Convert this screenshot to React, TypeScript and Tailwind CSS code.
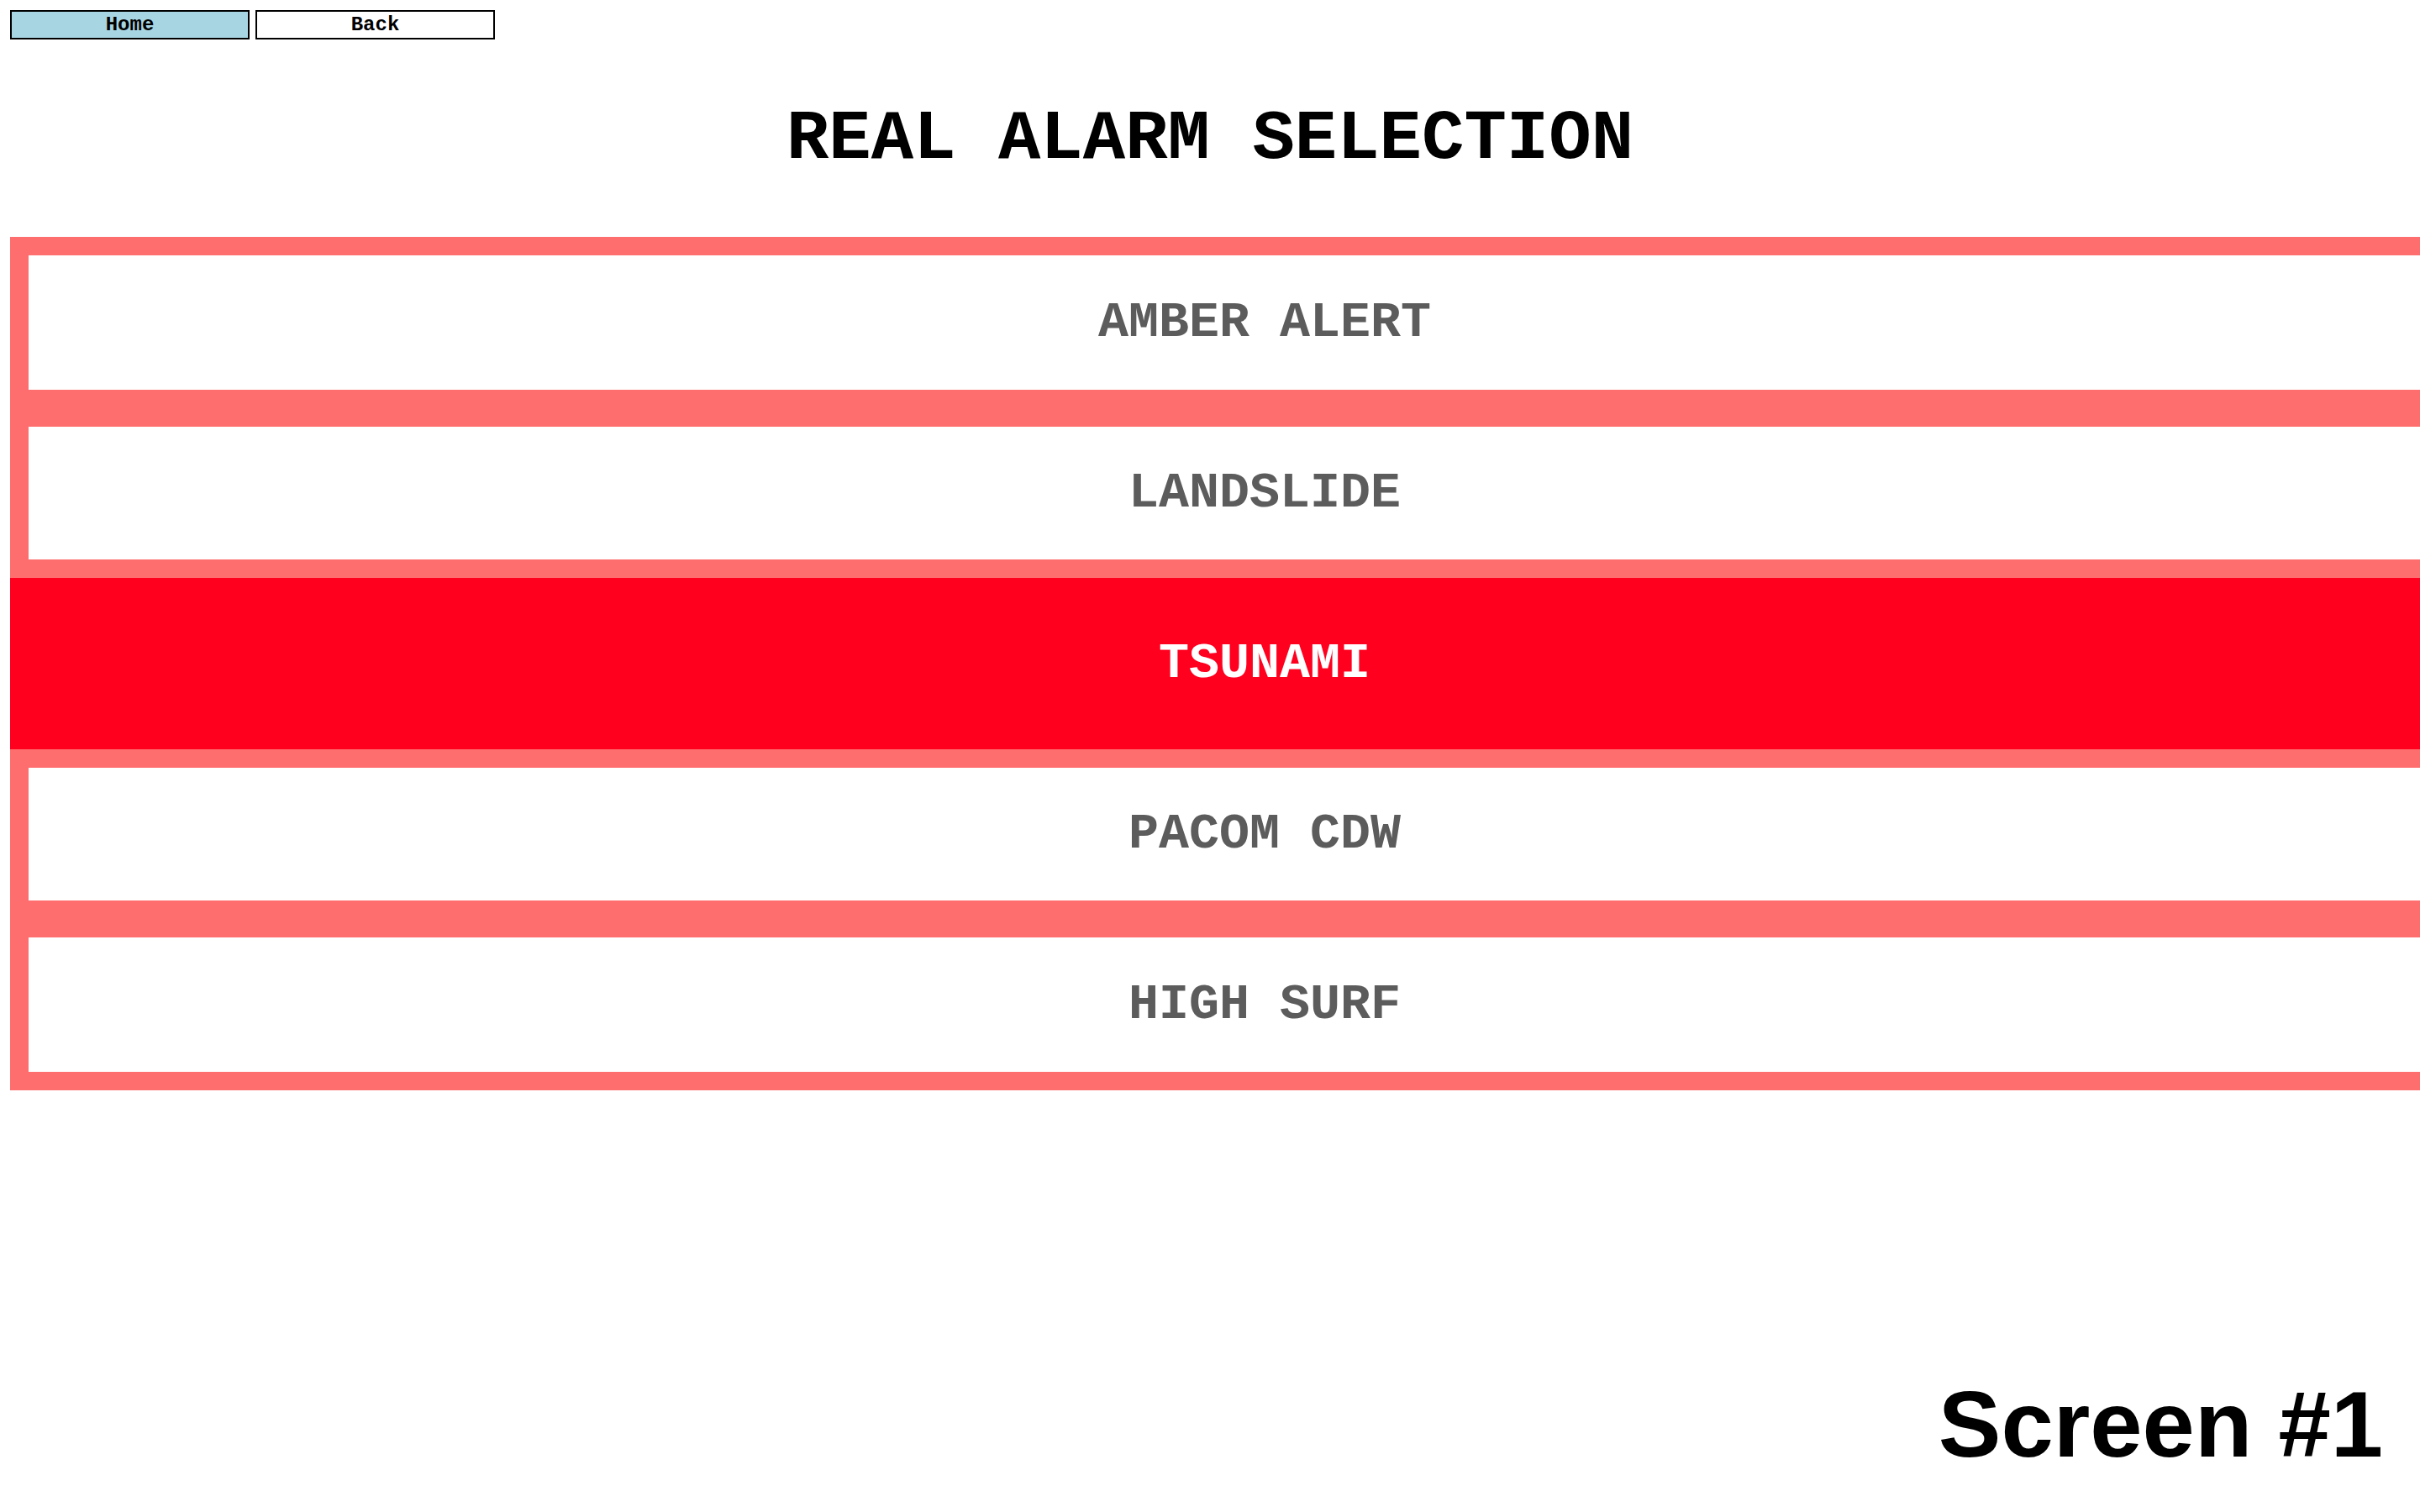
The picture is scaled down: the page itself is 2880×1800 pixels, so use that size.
const alarms = [
    { label: 'AMBER ALERT', height: 'h-[160px]' },
    { label: 'LANDSLIDE', height: 'h-[158px]' },
    { label: 'TSUNAMI', height: 'h-[204px]', selected: true },
    { label: 'PACOM CDW', height: 'h-[158px]' },
    { label: 'HIGH SURF', height: 'h-[160px]' },
];

const App = () => {
    return (
        <div className="relative w-screen h-screen overflow-hidden bg-white">
            {/* Nav buttons */}
            <div className="flex gap-[7px] pt-[12px] pl-[12px]">
                <button className="w-[285px] h-[35px] border-2 border-black bg-[#a8d5e2] text-[24px] font-bold text-black leading-none font-['Liberation_Mono',monospace]">
                    Home
                </button>
                <button className="w-[285px] h-[35px] border-2 border-black bg-white text-[24px] font-bold text-black leading-none font-['Liberation_Mono',monospace]">
                    Back
                </button>
            </div>

            <h1 className="mt-[77px] text-center text-[84px] leading-none font-bold text-black font-['Liberation_Mono',monospace]">
                REAL ALARM SELECTION
            </h1>

            {/* Alarm list */}
            <div className="mt-[74px] ml-[12px] w-[2986px] bg-[#ff6e6e] py-[22px]">
                {alarms.map((alarm, index) => {
                    const prev = alarms[index - 1];
                    const gap = index === 0 ? '' : alarm.selected || prev?.selected ? 'mt-[22px]' : 'mt-[44px]';
                    return (
                        <div
                            key={alarm.label}
                            className={
                                alarm.selected
                                    ? `${gap} ${alarm.height} w-full flex items-center justify-center bg-[#ff001f] text-white text-[60px] font-bold font-['Liberation_Mono',monospace]`
                                    : `${gap} ${alarm.height} ml-[22px] w-[2942px] flex items-center justify-center bg-white text-[#5c5c5c] text-[60px] font-bold font-['Liberation_Mono',monospace]`
                            }
                        >
                            {alarm.label}
                        </div>
                    );
                })}
            </div>

            <div className="absolute right-[44px] bottom-[48px] text-[112px] leading-none font-bold text-black font-['Liberation_Sans',Arial,sans-serif]">
                Screen #1
            </div>
        </div>
    );
};

export default App;
